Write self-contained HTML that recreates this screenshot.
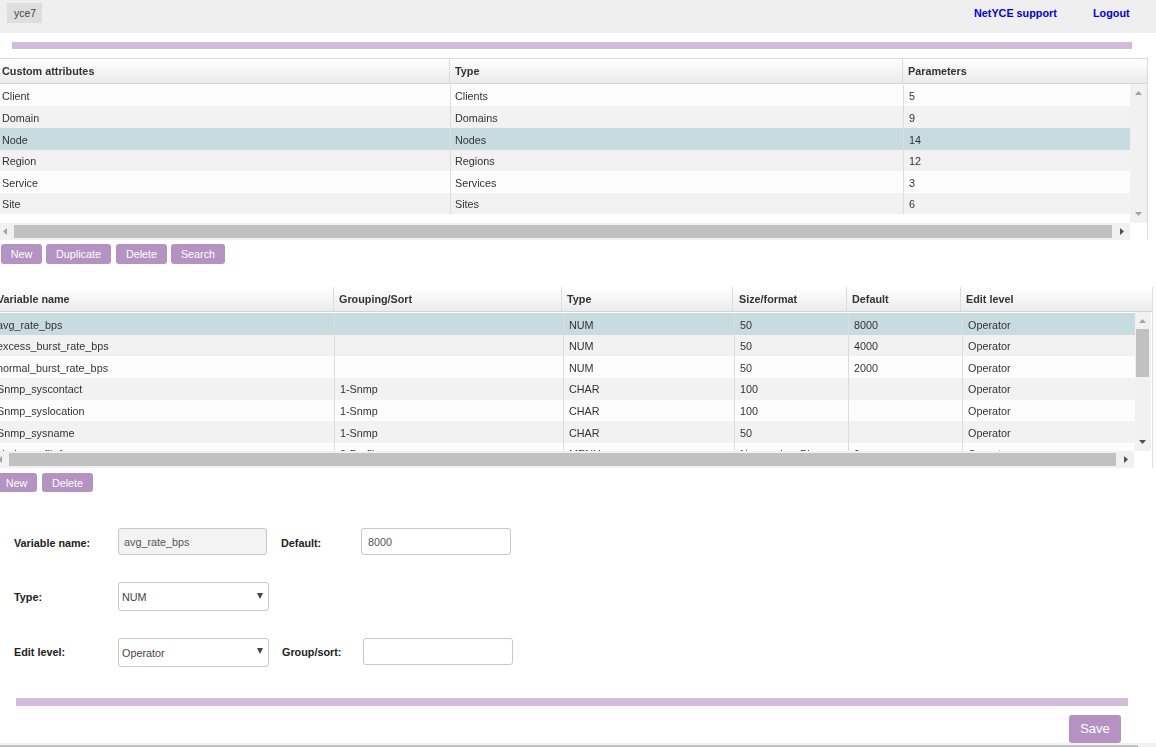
<!DOCTYPE html>
<html><head><meta charset="utf-8"><style>
html,body{margin:0;padding:0;}
body{width:1156px;height:747px;overflow:hidden;position:relative;background:#fff;font-family:"Liberation Sans", sans-serif;}
.r{position:absolute;box-sizing:content-box}
.t{position:absolute;white-space:nowrap;line-height:13px}
.g{will-change:transform}
</style></head><body>
<div class="r" style="left:0px;top:0px;width:1156px;height:33px;background:#efefef;"></div>
<div class="r" style="left:7px;top:3px;width:35px;height:20px;background:#dedede;"></div>
<div class="t" style="left:14px;top:6.5px;font-size:10.4px;font-weight:normal;color:#444;">yce7</div>
<div class="t" style="left:974px;top:7px;font-size:10.8px;font-weight:bold;color:#0000ee;">NetYCE support</div>
<div class="t" style="left:1093px;top:7px;font-size:10.8px;font-weight:bold;color:#0000ee;">Logout</div>
<div class="r" style="left:12px;top:42px;width:1120px;height:7px;background:#d3bcd9;"></div>
<div class="r" style="left:0px;top:58px;width:1148px;height:1px;background:#dcdcdc;"></div>
<div class="r" style="left:1147px;top:58px;width:1px;height:182px;background:#dcdcdc;"></div>
<div class="r" style="left:0;top:59px;width:1147px;height:24px;background:linear-gradient(#ffffff,#ebebeb)"></div>
<div class="r" style="left:0px;top:83px;width:1147px;height:1px;background:#d4d4d4;"></div>
<div class="r" style="left:449px;top:59px;width:1px;height:24px;background:#dcdcdc;"></div>
<div class="r" style="left:902px;top:59px;width:1px;height:24px;background:#dcdcdc;"></div>
<div class="t g" style="left:2px;top:65px;font-size:10.8px;font-weight:bold;color:#333;">Custom attributes</div>
<div class="t g" style="left:455px;top:65px;font-size:10.8px;font-weight:bold;color:#333;">Type</div>
<div class="t g" style="left:908px;top:65px;font-size:10.8px;font-weight:bold;color:#333;">Parameters</div>
<div class="r" style="left:0px;top:84px;width:1130px;height:22px;background:#fdfdfd;"></div>
<div class="t g" style="left:2px;top:90px;font-size:10.8px;font-weight:normal;color:#333;">Client</div>
<div class="t g" style="left:455px;top:90px;font-size:10.8px;font-weight:normal;color:#333;">Clients</div>
<div class="t g" style="left:909px;top:90px;font-size:10.8px;font-weight:normal;color:#333;">5</div>
<div class="r" style="left:0px;top:106px;width:1130px;height:22px;background:#f2f2f2;"></div>
<div class="t g" style="left:2px;top:112px;font-size:10.8px;font-weight:normal;color:#333;">Domain</div>
<div class="t g" style="left:455px;top:112px;font-size:10.8px;font-weight:normal;color:#333;">Domains</div>
<div class="t g" style="left:909px;top:112px;font-size:10.8px;font-weight:normal;color:#333;">9</div>
<div class="r" style="left:0px;top:128px;width:1130px;height:22px;background:#c7dbe0;"></div>
<div class="t g" style="left:2px;top:134px;font-size:10.8px;font-weight:normal;color:#333;">Node</div>
<div class="t g" style="left:455px;top:134px;font-size:10.8px;font-weight:normal;color:#333;">Nodes</div>
<div class="t g" style="left:909px;top:134px;font-size:10.8px;font-weight:normal;color:#333;">14</div>
<div class="r" style="left:0px;top:150px;width:1130px;height:21px;background:#f2f2f2;"></div>
<div class="t g" style="left:2px;top:155px;font-size:10.8px;font-weight:normal;color:#333;">Region</div>
<div class="t g" style="left:455px;top:155px;font-size:10.8px;font-weight:normal;color:#333;">Regions</div>
<div class="t g" style="left:909px;top:155px;font-size:10.8px;font-weight:normal;color:#333;">12</div>
<div class="r" style="left:0px;top:171px;width:1130px;height:22px;background:#fdfdfd;"></div>
<div class="t g" style="left:2px;top:177px;font-size:10.8px;font-weight:normal;color:#333;">Service</div>
<div class="t g" style="left:455px;top:177px;font-size:10.8px;font-weight:normal;color:#333;">Services</div>
<div class="t g" style="left:909px;top:177px;font-size:10.8px;font-weight:normal;color:#333;">3</div>
<div class="r" style="left:0px;top:193px;width:1130px;height:21px;background:#f2f2f2;"></div>
<div class="t g" style="left:2px;top:198px;font-size:10.8px;font-weight:normal;color:#333;">Site</div>
<div class="t g" style="left:455px;top:198px;font-size:10.8px;font-weight:normal;color:#333;">Sites</div>
<div class="t g" style="left:909px;top:198px;font-size:10.8px;font-weight:normal;color:#333;">6</div>
<div class="r" style="left:450px;top:85px;width:1px;height:129px;background:#dcdcdc;"></div>
<div class="r" style="left:903px;top:85px;width:1px;height:129px;background:#dcdcdc;"></div>
<div class="r" style="left:1130px;top:84px;width:17px;height:139px;background:#f1f1f1;"></div>
<svg class="r" style="left:1135px;top:91px" width="7" height="4"><polygon points="0,4 7,4 3.5,0" fill="#a3a3a3"/></svg>
<svg class="r" style="left:1135px;top:212px" width="7" height="4"><polygon points="0,0 7,0 3.5,4" fill="#a3a3a3"/></svg>
<div class="r" style="left:0px;top:223px;width:1130px;height:17px;background:#f1f1f1;"></div>
<div class="r" style="left:14px;top:225px;width:1098px;height:13px;background:#c1c1c1;"></div>
<svg class="r" style="left:3px;top:228px" width="4" height="7"><polygon points="4,0 4,7 0,3.5" fill="#a3a3a3"/></svg>
<svg class="r" style="left:1120px;top:228px" width="4" height="7"><polygon points="0,0 0,7 4,3.5" fill="#505050"/></svg>
<div class="r" style="left:1px;top:244px;width:41px;height:20px;background:#b492c2;border-radius:3px"></div>
<div class="t" style="left:1px;top:248px;width:41px;text-align:center;font-size:10.8px;color:#fff">New</div>
<div class="r" style="left:46px;top:244px;width:65px;height:20px;background:#b492c2;border-radius:3px"></div>
<div class="t" style="left:46px;top:248px;width:65px;text-align:center;font-size:10.8px;color:#fff">Duplicate</div>
<div class="r" style="left:116px;top:244px;width:51px;height:20px;background:#b492c2;border-radius:3px"></div>
<div class="t" style="left:116px;top:248px;width:51px;text-align:center;font-size:10.8px;color:#fff">Delete</div>
<div class="r" style="left:171px;top:244px;width:54px;height:20px;background:#b492c2;border-radius:3px"></div>
<div class="t" style="left:171px;top:248px;width:54px;text-align:center;font-size:10.8px;color:#fff">Search</div>
<div class="r" style="left:1152px;top:287px;width:1px;height:181px;background:#dcdcdc;"></div>
<div class="r" style="left:0;top:287px;width:1152px;height:24px;background:linear-gradient(#ffffff,#ebebeb)"></div>
<div class="r" style="left:0px;top:311px;width:1152px;height:1px;background:#d4d4d4;"></div>
<div class="r" style="left:333px;top:287px;width:1px;height:24px;background:#dcdcdc;"></div>
<div class="r" style="left:561px;top:287px;width:1px;height:24px;background:#dcdcdc;"></div>
<div class="r" style="left:732px;top:287px;width:1px;height:24px;background:#dcdcdc;"></div>
<div class="r" style="left:846px;top:287px;width:1px;height:24px;background:#dcdcdc;"></div>
<div class="r" style="left:960px;top:287px;width:1px;height:24px;background:#dcdcdc;"></div>
<div class="t g" style="left:-3px;top:293px;font-size:10.8px;font-weight:bold;color:#333;">Variable name</div>
<div class="t g" style="left:339px;top:293px;font-size:10.8px;font-weight:bold;color:#333;">Grouping/Sort</div>
<div class="t g" style="left:567px;top:293px;font-size:10.8px;font-weight:bold;color:#333;">Type</div>
<div class="t g" style="left:739px;top:293px;font-size:10.8px;font-weight:bold;color:#333;">Size/format</div>
<div class="t g" style="left:852px;top:293px;font-size:10.8px;font-weight:bold;color:#333;">Default</div>
<div class="t g" style="left:966px;top:293px;font-size:10.8px;font-weight:bold;color:#333;">Edit level</div>
<div class="r" style="left:0;top:313px;width:1135px;height:138px;overflow:hidden">
<div class="r" style="left:0px;top:0px;width:1135px;height:22px;background:#c7dbe0;"></div>
<div class="t g" style="left:-3px;top:6px;font-size:10.8px;font-weight:normal;color:#333;">avg_rate_bps</div>
<div class="t g" style="left:569px;top:6px;font-size:10.8px;font-weight:normal;color:#333;">NUM</div>
<div class="t g" style="left:740px;top:6px;font-size:10.8px;font-weight:normal;color:#333;">50</div>
<div class="t g" style="left:854px;top:6px;font-size:10.8px;font-weight:normal;color:#333;">8000</div>
<div class="t g" style="left:968px;top:6px;font-size:10.8px;font-weight:normal;color:#333;">Operator</div>
<div class="r" style="left:0px;top:22px;width:1135px;height:21px;background:#f2f2f2;"></div>
<div class="t g" style="left:-3px;top:27px;font-size:10.8px;font-weight:normal;color:#333;">excess_burst_rate_bps</div>
<div class="t g" style="left:569px;top:27px;font-size:10.8px;font-weight:normal;color:#333;">NUM</div>
<div class="t g" style="left:740px;top:27px;font-size:10.8px;font-weight:normal;color:#333;">50</div>
<div class="t g" style="left:854px;top:27px;font-size:10.8px;font-weight:normal;color:#333;">4000</div>
<div class="t g" style="left:968px;top:27px;font-size:10.8px;font-weight:normal;color:#333;">Operator</div>
<div class="r" style="left:0px;top:43px;width:1135px;height:22px;background:#fdfdfd;"></div>
<div class="t g" style="left:-3px;top:49px;font-size:10.8px;font-weight:normal;color:#333;">normal_burst_rate_bps</div>
<div class="t g" style="left:569px;top:49px;font-size:10.8px;font-weight:normal;color:#333;">NUM</div>
<div class="t g" style="left:740px;top:49px;font-size:10.8px;font-weight:normal;color:#333;">50</div>
<div class="t g" style="left:854px;top:49px;font-size:10.8px;font-weight:normal;color:#333;">2000</div>
<div class="t g" style="left:968px;top:49px;font-size:10.8px;font-weight:normal;color:#333;">Operator</div>
<div class="r" style="left:0px;top:65px;width:1135px;height:22px;background:#f2f2f2;"></div>
<div class="t g" style="left:-3px;top:70px;font-size:10.8px;font-weight:normal;color:#333;">Snmp_syscontact</div>
<div class="t g" style="left:340px;top:70px;font-size:10.8px;font-weight:normal;color:#333;">1-Snmp</div>
<div class="t g" style="left:569px;top:70px;font-size:10.8px;font-weight:normal;color:#333;">CHAR</div>
<div class="t g" style="left:740px;top:70px;font-size:10.8px;font-weight:normal;color:#333;">100</div>
<div class="t g" style="left:968px;top:70px;font-size:10.8px;font-weight:normal;color:#333;">Operator</div>
<div class="r" style="left:0px;top:87px;width:1135px;height:21px;background:#fdfdfd;"></div>
<div class="t g" style="left:-3px;top:92px;font-size:10.8px;font-weight:normal;color:#333;">Snmp_syslocation</div>
<div class="t g" style="left:340px;top:92px;font-size:10.8px;font-weight:normal;color:#333;">1-Snmp</div>
<div class="t g" style="left:569px;top:92px;font-size:10.8px;font-weight:normal;color:#333;">CHAR</div>
<div class="t g" style="left:740px;top:92px;font-size:10.8px;font-weight:normal;color:#333;">100</div>
<div class="t g" style="left:968px;top:92px;font-size:10.8px;font-weight:normal;color:#333;">Operator</div>
<div class="r" style="left:0px;top:108px;width:1135px;height:22px;background:#f2f2f2;"></div>
<div class="t g" style="left:-3px;top:114px;font-size:10.8px;font-weight:normal;color:#333;">Snmp_sysname</div>
<div class="t g" style="left:340px;top:114px;font-size:10.8px;font-weight:normal;color:#333;">1-Snmp</div>
<div class="t g" style="left:569px;top:114px;font-size:10.8px;font-weight:normal;color:#333;">CHAR</div>
<div class="t g" style="left:740px;top:114px;font-size:10.8px;font-weight:normal;color:#333;">50</div>
<div class="t g" style="left:968px;top:114px;font-size:10.8px;font-weight:normal;color:#333;">Operator</div>
<div class="r" style="left:0px;top:130px;width:1135px;height:22px;background:#fdfdfd;"></div>
<div class="t g" style="left:-3px;top:135px;font-size:10.8px;font-weight:normal;color:#333;">Node_profile1</div>
<div class="t g" style="left:340px;top:135px;font-size:10.8px;font-weight:normal;color:#333;">2-Profile</div>
<div class="t g" style="left:569px;top:135px;font-size:10.8px;font-weight:normal;color:#333;">MENU</div>
<div class="t g" style="left:740px;top:135px;font-size:10.8px;font-weight:normal;color:#333;">No_service_Plan</div>
<div class="t g" style="left:854px;top:135px;font-size:10.8px;font-weight:normal;color:#333;">0</div>
<div class="t g" style="left:968px;top:135px;font-size:10.8px;font-weight:normal;color:#333;">Operator</div>
<div class="r" style="left:334px;top:0px;width:1px;height:138px;background:#dcdcdc;"></div>
<div class="r" style="left:563px;top:0px;width:1px;height:138px;background:#dcdcdc;"></div>
<div class="r" style="left:734px;top:0px;width:1px;height:138px;background:#dcdcdc;"></div>
<div class="r" style="left:848px;top:0px;width:1px;height:138px;background:#dcdcdc;"></div>
<div class="r" style="left:962px;top:0px;width:1px;height:138px;background:#dcdcdc;"></div>
</div>
<div class="r" style="left:1135px;top:312px;width:16px;height:139px;background:#f1f1f1;"></div>
<div class="r" style="left:1136px;top:329px;width:13px;height:48px;background:#c1c1c1;"></div>
<svg class="r" style="left:1139px;top:319px" width="7" height="4"><polygon points="0,4 7,4 3.5,0" fill="#a3a3a3"/></svg>
<svg class="r" style="left:1139px;top:440px" width="7" height="4"><polygon points="0,0 7,0 3.5,4" fill="#505050"/></svg>
<div class="r" style="left:0px;top:451px;width:1134px;height:17px;background:#f1f1f1;"></div>
<div class="r" style="left:9px;top:453px;width:1107px;height:13px;background:#c1c1c1;"></div>
<svg class="r" style="left:-2px;top:456px" width="4" height="7"><polygon points="4,0 4,7 0,3.5" fill="#a3a3a3"/></svg>
<svg class="r" style="left:1124px;top:456px" width="4" height="7"><polygon points="0,0 0,7 4,3.5" fill="#505050"/></svg>
<div class="r" style="left:-4px;top:473px;width:41px;height:19px;background:#b492c2;border-radius:3px"></div>
<div class="t" style="left:-4px;top:477px;width:41px;text-align:center;font-size:10.8px;color:#fff">New</div>
<div class="r" style="left:42px;top:473px;width:51px;height:19px;background:#b492c2;border-radius:3px"></div>
<div class="t" style="left:42px;top:477px;width:51px;text-align:center;font-size:10.8px;color:#fff">Delete</div>
<div class="t" style="left:14px;top:537px;font-size:10.8px;font-weight:bold;color:#222;">Variable name:</div>
<div class="t" style="left:281px;top:537px;font-size:10.8px;font-weight:bold;color:#222;">Default:</div>
<div class="t" style="left:14px;top:591px;font-size:10.8px;font-weight:bold;color:#222;">Type:</div>
<div class="t" style="left:14px;top:646px;font-size:10.8px;font-weight:bold;color:#222;">Edit level:</div>
<div class="t" style="left:282px;top:646px;font-size:10.8px;font-weight:bold;color:#222;">Group/sort:</div>
<div class="r" style="left:118px;top:528px;width:147px;height:25px;background:#f3f3f3;border:1px solid #c8c8c8;border-radius:3px"></div>
<div class="t" style="left:124px;top:536px;font-size:10.8px;font-weight:normal;color:#555;">avg_rate_bps</div>
<div class="r" style="left:361px;top:528px;width:148px;height:25px;background:#fff;border:1px solid #c8c8c8;border-radius:3px"></div>
<div class="t" style="left:368px;top:536px;font-size:10.8px;font-weight:normal;color:#555;">8000</div>
<div class="r" style="left:118px;top:582px;width:149px;height:27px;background:#fff;border:1px solid #c8c8c8;border-radius:3px"></div>
<div class="t" style="left:122px;top:591px;font-size:10.8px;font-weight:normal;color:#444;">NUM</div>
<div class="r" style="left:118px;top:638px;width:149px;height:27px;background:#fff;border:1px solid #c8c8c8;border-radius:3px"></div>
<div class="t" style="left:122px;top:647px;font-size:10.8px;font-weight:normal;color:#444;">Operator</div>
<div class="r" style="left:363px;top:638px;width:148px;height:25px;background:#fff;border:1px solid #c8c8c8;border-radius:3px"></div>
<svg class="r" style="left:257px;top:593px" width="6" height="6"><polygon points="0,0 6,0 3,6" fill="#474747"/></svg>
<svg class="r" style="left:257px;top:648px" width="6" height="6"><polygon points="0,0 6,0 3,6" fill="#474747"/></svg>
<div class="r" style="left:16px;top:698px;width:1112px;height:8px;background:#d3bcd9;"></div>
<div class="r" style="left:1069px;top:715px;width:52px;height:28px;background:#b492c2;border-radius:3px"></div>
<div class="t" style="left:1069px;top:722px;width:52px;text-align:center;font-size:13px;color:#fff">Save</div>
<div class="r" style="left:0px;top:743px;width:1156px;height:4px;background:#f1f1f1;"></div>
<div class="r" style="left:0px;top:745px;width:1138px;height:2px;background:#c1c1c1;"></div>
</body></html>
